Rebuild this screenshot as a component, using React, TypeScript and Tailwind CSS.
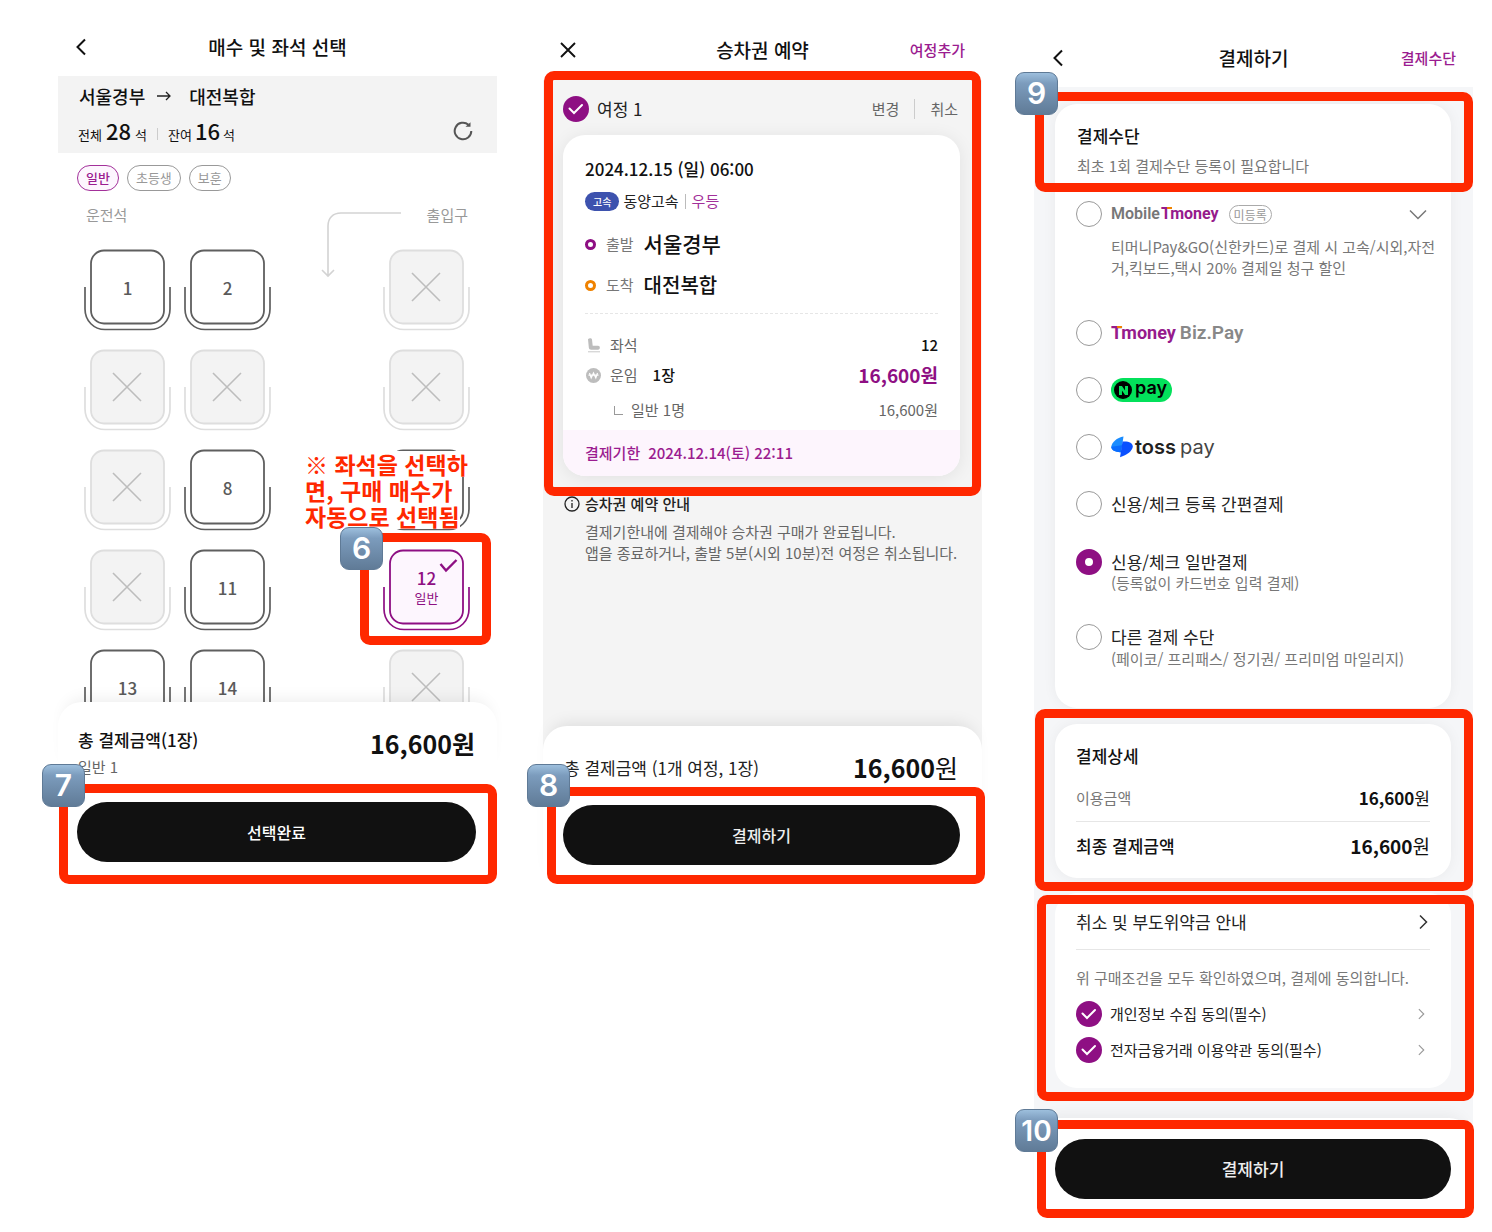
import React from 'react';
import { clsx } from 'clsx';

type SeatState = 'free' | 'taken' | 'selected';

type SeatData = {
  id: string;
  label?: string;
  state: SeatState;
  note?: string[];
};

const seatRows: SeatData[][] = [
  [
    { id: '1', label: '1', state: 'free' },
    { id: '2', label: '2', state: 'free' },
    { id: '3', state: 'taken' },
  ],
  [
    { id: '4', state: 'taken' },
    { id: '5', state: 'taken' },
    { id: '6', state: 'taken' },
  ],
  [
    { id: '7', state: 'taken' },
    { id: '8', label: '8', state: 'free' },
    { id: '9', state: 'free', note: ['※ 좌석을 선택하', '면, 구매 매수가', '자동으로 선택됨'] },
  ],
  [
    { id: '10', state: 'taken' },
    { id: '11', label: '11', state: 'free' },
    { id: '12', label: '12', state: 'selected' },
  ],
  [
    { id: '13', label: '13', state: 'free' },
    { id: '14', label: '14', state: 'free' },
    { id: '15', state: 'taken' },
  ],
];

const seatColors = {
  free: { stroke: '#5f5f5f', fill: '#ffffff' },
  taken: { stroke: '#dedede', fill: '#f3f3f3' },
  selected: { stroke: '#8e0f83', fill: '#fdf6fe' },
};

function Frame({ className }: { className: string }) {
  return (
    <div
      aria-hidden="true"
      className={clsx('pointer-events-none absolute z-10 rounded-[10px] border-[9px] border-[#ff2800]', className)}
    />
  );
}

function StepBadge({ step, className }: { step: number; className: string }) {
  return (
    <div
      className={clsx(
        "absolute z-20 flex size-[43px] items-center justify-center rounded-[9px] border border-[#5f7a96] bg-linear-to-b from-[#9dbfdd] via-[#7c9cbd] via-25% to-[#607b97] font-['Inter',sans-serif] font-semibold text-white",
        step > 9 ? 'text-[28px]' : 'text-[30px]',
        className
      )}
    >
      {step}
    </div>
  );
}

function BackIcon() {
  return (
    <svg width="12" height="18" viewBox="0 0 12 18" fill="none" stroke="#111" strokeWidth="2">
      <path d="M10 1.5 2.5 9l7.5 7.5" />
    </svg>
  );
}

function NextIcon({ className }: { className?: string }) {
  return (
    <svg width="9" height="16" viewBox="0 0 9 16" fill="none" stroke="currentColor" strokeWidth="1.5" className={className}>
      <path d="M1 1.5 7.5 8 1 14.5" />
    </svg>
  );
}

function CheckBox({ id }: { id: string }) {
  return (
    <span className="grid size-[26px] shrink-0 place-items-center">
      <input
        id={id}
        type="checkbox"
        defaultChecked
        className="col-start-1 row-start-1 size-[26px] appearance-none rounded-full bg-[#8e0f83]"
      />
      <svg
        width="16"
        height="12"
        viewBox="0 0 16 12"
        fill="none"
        stroke="#fff"
        strokeWidth="2"
        strokeLinecap="round"
        className="pointer-events-none col-start-1 row-start-1"
      >
        <path d="m1.500 5.500 4.500 4.500 8-8" />
      </svg>
    </span>
  );
}

function Header({ title, left, right, className }: { title: string; left: React.ReactNode; right?: string; className: string }) {
  return (
    <header className={clsx('grid grid-cols-[1fr_auto_1fr] items-center px-[17px] text-[19px]', className)}>
      {left}
      <h1 className="font-medium">{title}</h1>
      {right && (
        <a href="#" className="justify-self-end text-[15px] font-medium text-[#9b1c90]">
          {right}
        </a>
      )}
    </header>
  );
}

function Seat({ seat }: { seat: SeatData }) {
  const { stroke, fill } = seatColors[seat.state];
  return (
    <div className="relative">
      <button
        type="button"
        aria-label={`좌석 ${seat.id}`}
        disabled={seat.state === 'taken'}
        className="grid h-[82px] w-[87px] place-items-center"
      >
        <svg width="87" height="82" viewBox="0 0 87 82" fill="none" stroke={stroke} className="col-start-1 row-start-1">
          <path d="M1 38v22c0 12 9 20.500 20 20.500h45c11 0 20-8.500 20-20.500V38" strokeWidth="1.700" />
          <rect x="7" y="1.500" width="73" height="73" rx="13" fill={fill} strokeWidth="1.800" />
          {seat.state === 'taken' && <path d="m29 24 28 28M57 24 29 52" stroke="#bdbdbd" strokeWidth="1.600" />}
          {seat.state === 'selected' && <path d="m57.500 15 5.500 6.500L73.500 11" strokeWidth="2.400" />}
        </svg>
        {seat.label && (
          <span
            className={clsx(
              'col-start-1 row-start-1 flex flex-col text-[17px] font-medium',
              seat.state === 'selected' ? 'pb-1 leading-5 text-[#8e0f83]' : 'pb-1 leading-6 text-[#5a5a5a]'
            )}
          >
            {seat.label}
            {seat.state === 'selected' && <small className="text-[13px] font-normal">일반</small>}
          </span>
        )}
      </button>
      {seat.note && (
        <p className="absolute top-[2px] -left-[78px] z-20 text-[23px] leading-[26px] font-bold whitespace-nowrap text-[#ff2800]">
          {seat.note.map((line) => (
            <span key={line} className="block w-fit bg-white">
              {line}
            </span>
          ))}
        </p>
      )}
      {seat.state === 'selected' && (
        <>
          <Frame className="-top-4 -left-[23px] h-[112px] w-[131px]" />
          <StepBadge step={6} className="-top-[22px] -left-[43px]" />
        </>
      )}
    </div>
  );
}

function SeatScreen() {
  return (
    <section className="min-w-0 flex-1">
      <Header title="매수 및 좌석 선택" className="h-[76px] pt-[18px]" left={<button aria-label="뒤로"><BackIcon /></button>} />

      <div className="bg-[#f3f3f3] pt-[7px] pr-6 pb-[6px] pl-[21px]">
        <div className="flex h-[26px] items-center text-[18px] font-medium">
          <span>서울경부</span>
          <svg width="14" height="10" viewBox="0 0 14 10" fill="none" stroke="#222" strokeWidth="1.300" className="mr-[18px] ml-3">
            <path d="M0 5h13M9 1l4 4-4 4" />
          </svg>
          <span>대전복합</span>
        </div>
        <div className="mt-[6px] -ml-px flex h-8 items-center justify-between">
          <p className="flex items-baseline pt-[6px] text-[13px] leading-8">
            전체<b className="mx-1 text-[22px] leading-6 font-medium">28</b>석
            <span className="mr-[10px] ml-[10px] h-3 w-px self-center bg-[#ccc]" />
            잔여<b className="mx-[3px] text-[22px] leading-6 font-medium">16</b>석
          </p>
          <button aria-label="새로고침">
            <svg width="20" height="20" viewBox="0 0 20 20" fill="none" stroke="#555" strokeWidth="2">
              <path d="M18.300 10a8.300 8.300 0 1 1-2.800-6.200" />
              <path d="M12.500 5.800h5V1.200z" fill="#555" stroke="none" />
            </svg>
          </button>
        </div>
      </div>

      <div className="flex gap-2 pt-3 pl-[19px] text-[13px] leading-6">
        <button className="rounded-full border border-[#a3309a] bg-[#fdf6fe] px-2 font-medium text-[#9b1c90]">일반</button>
        <button className="rounded-full border border-[#999] px-2 text-[#999]">초등생</button>
        <button className="rounded-full border border-[#999] px-2 text-[#999]">보훈</button>
      </div>

      <div className="relative mt-3 flex justify-between pr-[29px] pl-7 text-[15px] leading-6 text-[#999]">
        <span>운전석</span>
        <span>출입구</span>
        <svg width="82" height="68" viewBox="0 0 82 68" fill="none" stroke="#d3d3d3" strokeWidth="1.600" className="absolute top-[9px] right-[95px]">
          <path d="M81 1H21C13 1 8 6 8 14v50M2 58l6 6 6-6" />
        </svg>
      </div>

      <div className="mt-[22px] h-[453px] overflow-hidden">
        <div className="flex flex-col gap-[18px] pr-[27px] pl-[26px]">
          {seatRows.map(([left, middle, right]) => (
            <div key={left.id} className="flex justify-between">
              <div className="flex gap-[13px]">
                <Seat seat={left} />
                <Seat seat={middle} />
              </div>
              <Seat seat={right} />
            </div>
          ))}
        </div>
      </div>

      <div className="relative rounded-[24px] bg-white pt-[26px] pr-[22px] pb-1 pl-5 shadow-[0_-10px_16px_-8px_rgba(0,0,0,0.08)]">
        <div className="flex items-start justify-between">
          <div>
            <p className="text-[17px] leading-6 font-medium">총 결제금액(1장)</p>
            <p className="mt-1 text-[15px] leading-[22px] text-[#666]">일반 1</p>
          </div>
          <strong className="text-[25px] leading-[30px] font-bold">16,600원</strong>
        </div>
      </div>

      <div className="relative bg-white pt-5 pr-[21px] pb-6 pl-[19px]">
        <button className="h-[60px] w-full rounded-full bg-[#111] text-[16px] font-medium text-white">선택완료</button>
        <Frame className="top-[2px] right-0 bottom-[2px] left-px" />
        <StepBadge step={7} className="-top-[18px] -left-4" />
      </div>
    </section>
  );
}

function BookingScreen() {
  return (
    <section className="ml-[46px] min-w-0 flex-1">
      <Header
        title="승차권 예약"
        right="여정추가"
        className="h-20 pt-5"
        left={
          <button aria-label="닫기">
            <svg width="16" height="16" viewBox="0 0 16 16" fill="none" stroke="#111" strokeWidth="1.900">
              <path d="m1 1 14 14M15 1 1 15" />
            </svg>
          </button>
        }
      />

      <div className="bg-[#f4f4f4] pb-[187px]">
        <div className="relative pt-4 pr-[22px] pb-[17px] pl-5">
          <div className="flex h-[26px] items-center pr-[2px] text-[15px] text-[#666]">
            <CheckBox id="trip-1" />
            <label htmlFor="trip-1" className="ml-2 text-[17px] text-[#222]">
              여정 1
            </label>
            <button className="ml-auto">변경</button>
            <span className="mx-[15px] h-5 w-px bg-[#ccc]" />
            <button>취소</button>
          </div>

          <article className="mt-[13px] overflow-hidden rounded-[22px] bg-white shadow-[0_2px_18px_rgba(0,0,0,0.08)]">
            <div className="px-[22px] pt-[22px] text-[15px]">
              <h2 className="text-[17px] leading-6 font-medium">2024.12.15 (일) 06:00</h2>
              <div className="mt-[10px] flex h-5 items-center text-[#222]">
                <span className="rounded-full bg-[#3d52ae] px-2 text-[10px] leading-[19px] font-medium text-white">고속</span>
                <span className="ml-1">동양고속</span>
                <span className="mx-[6px] h-[15px] w-px bg-[#bbb]" />
                <span className="text-[#a3309a]">우등</span>
              </div>
              <div className="mt-[18px] flex h-[30px] items-center">
                <span className="size-[11px] rounded-full border-3 border-[#8e0f83]" />
                <span className="mr-[10px] ml-[10px] text-[#777]">출발</span>
                <strong className="text-[21px] font-medium">서울경부</strong>
              </div>
              <div className="mt-[11px] flex h-[30px] items-center">
                <span className="size-[11px] rounded-full border-3 border-[#ef8200]" />
                <span className="mr-[10px] ml-[10px] text-[#777]">도착</span>
                <strong className="text-[20px] font-medium">대전복합</strong>
              </div>
              <div className="mt-[13px] border-t border-dashed border-[#e6e6e6]" />
              <div className="mt-5 flex h-[22px] items-center">
                <svg width="14" height="15" viewBox="0 0 14 15" className="mr-[9px] ml-[2px]">
                  <path d="M1 1.200C2 0 4.700 0 5 1.500l.7 6.300h5.300c2.500 0 2.500 3.800 0 4H4.200c-1.400 0-2.200-.8-2.400-2.200z" fill="#bdbdbd" />
                  <path d="M1 13.800h12" stroke="#c8c8c8" />
                </svg>
                <span className="text-[#666]">좌석</span>
                <span className="ml-auto font-medium">12</span>
              </div>
              <div className="mt-[5px] flex h-7 items-center">
                <svg width="15" height="15" viewBox="0 0 15 15" className="mr-[9px] ml-px">
                  <circle cx="7.500" cy="7.500" r="7.500" fill="#bdbdbd" />
                  <path d="m3.500 5 1.700 5 2.300-5 2.300 5 1.700-5M2.500 7.200h10" fill="none" stroke="#fff" strokeWidth="1.200" />
                </svg>
                <span className="text-[#666]">운임</span>
                <span className="ml-[15px] font-medium">1장</span>
                <strong className="ml-auto text-[19px] font-bold text-[#8e0f83]">16,600원</strong>
              </div>
              <div className="mt-[10px] flex h-[22px] items-center text-[#666]">
                <span className="mr-2 ml-[29px] size-[9px] border-b border-l border-[#999]" />
                <span>일반 1명</span>
                <span className="ml-auto">16,600원</span>
              </div>
            </div>
            <p className="mt-[9px] flex h-[46px] items-center gap-2 bg-[#fdf5fd] px-[22px] text-[15px] font-medium text-[#9b1c90]">
              <span>결제기한</span>
              <span>2024.12.14(토) 22:11</span>
            </p>
          </article>
          <Frame className="-top-[9px] right-px -bottom-[3px] left-px" />
        </div>

        <div className="pl-[21px] text-[15px]">
          <h2 className="flex h-[22px] items-center gap-[5px] font-medium text-[#222]">
            <svg width="16" height="16" viewBox="0 0 16 16" fill="none" stroke="#222" strokeWidth="1.300">
              <circle cx="8" cy="8" r="7" />
              <path d="M8 7v5M8 4v1.500" />
            </svg>
            승차권 예약 안내
          </h2>
          <p className="mt-[6px] pl-[21px] leading-[21px] whitespace-nowrap text-[#666]">
            결제기한내에 결제해야 승차권 구매가 완료됩니다.
            <br />
            앱을 종료하거나, 출발 5분(시외 10분)전 여정은 취소됩니다.
          </p>
        </div>
      </div>

      <div className="relative -mt-6 rounded-t-[24px] bg-white pt-7 shadow-[0_-10px_16px_-8px_rgba(0,0,0,0.1)]">
        <div className="flex h-[28px] items-center justify-between pr-6 pl-[21px]">
          <p className="text-[17px] text-[#222]">총 결제금액 (1개 여정, 1장)</p>
          <p className="text-[25px]">
            <b>16,600</b>원
          </p>
        </div>
        <div className="relative pt-[23px] pr-[22px] pb-5 pl-5">
          <button className="h-[60px] w-full rounded-full bg-[#111] text-[16px] font-medium text-[#eee]">결제하기</button>
          <Frame className="top-[5px] -right-[3px] bottom-px left-1" />
          <StepBadge step={8} className="-top-[18px] -left-4" />
        </div>
      </div>
    </section>
  );
}

function Tmoney({ className }: { className: string }) {
  return (
    <span className={clsx("relative font-['Roboto',sans-serif] font-bold text-[#961b8c]", className)}>
      Tmoney
      <span className="absolute top-[6px] left-[6px] h-[2px] w-[5px] bg-[#ef8200]" />
    </span>
  );
}

function PayOption({
  id,
  className,
  checked,
  detail,
  trailing,
  children,
}: {
  id: string;
  className?: string;
  checked?: boolean;
  detail?: React.ReactNode;
  trailing?: React.ReactNode;
  children: React.ReactNode;
}) {
  return (
    <li className={clsx('flex gap-[9px]', className)}>
      <input
        id={id}
        type="radio"
        name="pay"
        defaultChecked={checked}
        className="size-[26px] shrink-0 appearance-none rounded-full border border-[#999] checked:border-[9px] checked:border-[#8e0f83]"
      />
      <div className="min-w-0 flex-1">
        <div className="flex h-[26px] items-center">
          <label htmlFor={id} className="flex items-center text-[17px] leading-[26px] text-[#222]">
            {children}
          </label>
          {trailing}
        </div>
        {detail}
      </div>
    </li>
  );
}

function PaymentScreen() {
  return (
    <section className="ml-[52px] min-w-0 flex-1">
      <Header
        title="결제하기"
        right="결제수단"
        className="h-[87px] pt-[29px]"
        left={<button aria-label="뒤로" className="pl-px"><BackIcon /></button>}
      />

      <div className="bg-[#f5f6f8] pt-[17px] pr-[22px] pb-[54px] pl-[21px]">
        <div className="rounded-[22px] bg-white pb-10 shadow-[0_0_14px_rgba(0,0,0,0.05)]">
          <div className="relative px-[22px] pt-5 pb-[15px]">
            <h2 className="text-[17px] leading-6 font-medium">결제수단</h2>
            <p className="mt-[7px] text-[15px] leading-[22px] text-[#777]">최초 1회 결제수단 등록이 필요합니다</p>
            <Frame className="-top-3 -right-[22px] bottom-0 -left-5" />
            <StepBadge step={9} className="-top-8 -left-10" />
          </div>

          <ul className="px-[21px] pt-[9px]">
            <PayOption
              id="mobile"
              trailing={
                <>
                  <span className="ml-[10px] rounded-full border border-[#aaa] px-1 text-[12px] leading-[17px] text-[#999]">미등록</span>
                  <svg width="18" height="11" viewBox="0 0 18 11" fill="none" stroke="#777" strokeWidth="1.500" className="mr-[3px] ml-auto">
                    <path d="m1 1.500 8 8 8-8" />
                  </svg>
                </>
              }
              detail={
                <p className="mt-[9px] text-[15px] leading-[21px] whitespace-nowrap text-[#777]">
                  티머니Pay&amp;GO(신한카드)로 결제 시 고속/시외,자전
                  <br />
                  거,킥보드,택시 20% 결제일 청구 할인
                </p>
              }
            >
              <span className="mr-px font-['Roboto',sans-serif] text-[16px] font-semibold text-[#777]">Mobile</span>
              <Tmoney className="text-[16px]" />
            </PayOption>
            <PayOption id="biz" className="mt-[42px]">
              <Tmoney className="text-[18px]" />
              <span className="ml-1 font-['Roboto',sans-serif] text-[19px] font-semibold text-[#888]">Biz.Pay</span>
            </PayOption>
            <PayOption id="npay" className="mt-[31px]">
              <span className="flex h-6 items-center gap-[3px] rounded-full bg-[#03e15b] pr-[5px] pl-[3px] text-black">
                <span className="grid size-[18px] place-items-center rounded-full bg-black">
                  <svg width="9" height="9" viewBox="0 0 10 10" fill="#03e15b">
                    <path d="M0 0h3.300l3.400 5V0H10v10H6.700L3.300 5v5H0z" />
                  </svg>
                </span>
                <span className="pb-1 font-['Inter',sans-serif] text-[18px] leading-5 font-semibold">pay</span>
              </span>
            </PayOption>
            <PayOption id="toss" className="mt-[31px]">
              <svg width="22" height="22" viewBox="0 0 22 22" className="mr-[2px]">
                <path d="M12.500.5C6 1.500.5 6.500.3 10.800c-.1 3.500 4.700 5.700 9.700 5.400z" fill="#1a8cff" />
                <path d="M.3 10.800c-.1 3.500 4.700 5.700 9.700 5.400l1-7z" fill="#0a6cff" />
                <path d="M11.500 5.600c6-.6 10.300 1.400 10.300 5 0 4-6 9-12.800 10.600z" fill="#0a50ff" />
              </svg>
              <span className="font-['Inter',sans-serif] text-[20px] font-semibold text-[#222]">toss</span>
              <span className="ml-1 font-['Inter',sans-serif] text-[20px] text-[#444]">pay</span>
            </PayOption>
            <PayOption id="easy" className="mt-[31px]">
              신용/체크 등록 간편결제
            </PayOption>
            <PayOption
              id="card"
              checked
              className="mt-8"
              detail={<p className="text-[15px] leading-4 text-[#777]">(등록없이 카드번호 입력 결제)</p>}
            >
              신용/체크 일반결제
            </PayOption>
            <PayOption
              id="other"
              className="mt-[33px]"
              detail={<p className="text-[15px] leading-[18px] text-[#777]">(페이코/ 프리패스/ 정기권/ 프리미엄 마일리지)</p>}
            >
              다른 결제 수단
            </PayOption>
          </ul>
        </div>

        <div className="relative mt-4 rounded-[22px] bg-white px-[21px] pt-5 pb-[19px] shadow-[0_0_14px_rgba(0,0,0,0.05)]">
          <h2 className="text-[17px] leading-6 font-medium">결제상세</h2>
          <div className="mt-[18px] flex h-6 items-center justify-between">
            <span className="text-[15px] text-[#777]">이용금액</span>
            <span className="text-[17px]">
              <b>16,600</b>원
            </span>
          </div>
          <div className="mt-[11px] h-px bg-[#e6e6e6]" />
          <div className="mt-[11px] flex h-[26px] items-center justify-between">
            <span className="text-[17px] font-medium">최종 결제금액</span>
            <span className="text-[19px]">
              <b>16,600</b>원
            </span>
          </div>
          <Frame className="-top-[15px] -right-[22px] -bottom-[13px] -left-5" />
        </div>

        <div className="relative mt-[15px] rounded-[22px] bg-white px-[21px] pt-[17px] pb-[25px]">
          <a href="#" className="flex items-center justify-between pr-[2px] text-[17px] leading-6 text-[#222]">
            취소 및 부도위약금 안내
            <NextIcon className="text-[#333]" />
          </a>
          <div className="mt-[15px] h-px bg-[#e6e6e6]" />
          <p className="mt-[17px] text-[15px] leading-[22px] whitespace-nowrap text-[#777]">위 구매조건을 모두 확인하였으며, 결제에 동의합니다.</p>
          <div className="mt-3 flex h-[26px] items-center pr-1 text-[15px]">
            <CheckBox id="privacy" />
            <label htmlFor="privacy" className="mr-auto ml-2 text-[#222]">
              개인정보 수집 동의(필수)
            </label>
            <NextIcon className="h-3 text-[#999]" />
          </div>
          <div className="mt-[10px] flex h-[26px] items-center pr-1 text-[15px]">
            <CheckBox id="terms" />
            <label htmlFor="terms" className="mr-auto ml-2 text-[#222]">
              전자금융거래 이용약관 동의(필수)
            </label>
            <NextIcon className="h-3 text-[#999]" />
          </div>
          <Frame className="top-[2px] -right-[23px] -bottom-[13px] -left-[18px]" />
        </div>
      </div>

      <div className="relative -mt-6 rounded-t-[24px] bg-white pt-[21px] pr-[22px] pb-[21px] pl-[21px] shadow-[0_-10px_16px_-8px_rgba(0,0,0,0.06)]">
        <button className="h-[60px] w-full rounded-full bg-[#111] text-[17px] font-medium text-[#eee]">결제하기</button>
        <Frame className="top-[2px] -right-px bottom-[2px] left-[3px]" />
        <StepBadge step={10} className="-top-[9px] -left-[19px]" />
      </div>
    </section>
  );
}

export default function App() {
  return (
    <main
      lang="ko"
      className="flex items-start overflow-hidden bg-white pr-[19px] pb-3 pl-[58px] font-['Noto_Sans_CJK_KR',sans-serif] text-[#111]"
    >
      <SeatScreen />
      <BookingScreen />
      <PaymentScreen />
    </main>
  );
}
